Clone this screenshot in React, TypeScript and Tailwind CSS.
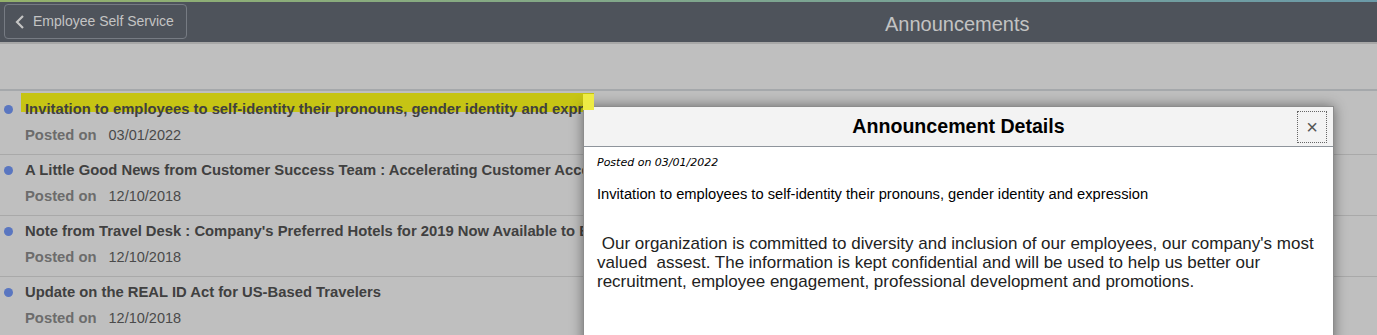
import React from "react";

interface Announcement {
  title: string;
  date: string;
}

const announcements: Announcement[] = [
  {
    title: "Invitation to employees to self-identity their pronouns, gender identity and expression",
    date: "03/01/2022",
  },
  {
    title: "A Little Good News from Customer Success Team : Accelerating Customer Acceptance",
    date: "12/10/2018",
  },
  {
    title: "Note from Travel Desk : Company's Preferred Hotels for 2019 Now Available to Book",
    date: "12/10/2018",
  },
  { title: "Update on the REAL ID Act for US-Based Travelers", date: "12/10/2018" },
];

const App: React.FC = () => {
  return (
    <div className="relative h-[335px] w-full overflow-hidden bg-[#bfbfbf] font-['Liberation_Sans',Arial,sans-serif]">
      {/* верхняя полоска */}
      <div className="h-[2px] bg-linear-to-r from-[#94b16b] to-[#6b9aa8]" />

      {/* шапка */}
      <div className="flex h-[40px] items-start bg-[#4e535b] pl-[4px] pt-[2px]">
        <button className="flex h-[35px] w-[183px] items-center rounded-[4px] border border-[#767b83] pl-[10px] text-[14px] text-[#c4c4c4]">
          <svg width="10" height="16" viewBox="0 0 10 16" className="mr-[8px]">
            <polyline points="8,2 2,8 8,14" fill="none" stroke="#c4c4c4" strokeWidth="2.2" />
          </svg>
          Employee Self Service
        </button>
        <div className="ml-[698px] mt-[8px] text-[20px] leading-[24px] text-[#c3c3c3]">Announcements</div>
      </div>

      <div className="h-[2px] bg-[#a7a7a7]" />
      <div className="h-[45px]" />
      <div className="h-[2px] bg-[#a5a8ab]" />

      {/* список объявлений */}
      <div className="relative pt-[3px]">
        <div className="absolute left-[21px] top-[2px] h-[19px] w-[573px] bg-[#c6c414]" />
        {announcements.map((a, i) => (
          <div key={i} className="relative border-b border-[#a9a9a9] pb-[9px] pt-[6px]">
            <div className="flex h-[19px] items-center whitespace-nowrap text-[14.8px] font-bold leading-[19px] text-[#404040]">
              <span className="ml-[4px] mr-[12px] h-[9px] w-[9px] shrink-0 rounded-full bg-[#5a76c0]" />
              {/* текст уходит под окно — обрезаем по его краю */}
              <span className="max-w-[558px] overflow-hidden">{a.title}</span>
            </div>
            <div className="mt-[7px] flex h-[19px] items-center pl-[25px] leading-[19px]">
              <span className="text-[14.8px] font-bold text-[#6c6c6c]">Posted on</span>
              <span className="ml-[12px] text-[14.5px] text-[#4a4a4a]">{a.date}</span>
            </div>
          </div>
        ))}
      </div>

      {/* окно деталей */}
      <div className="absolute left-[583px] top-[106px] h-[240px] w-[751px] border border-[#8c8c8c] bg-white shadow-[0_0_12px_rgba(0,0,0,0.45)]">
        <div className="relative flex h-[40px] items-center justify-center border-b border-[#8e949b] bg-[#f3f3f3]">
          <span className="text-[19.6px] font-bold text-black">Announcement Details</span>
          <button className="absolute right-[6px] top-[4px] flex h-[32px] w-[30px] items-center justify-center border border-dotted border-[#666] text-[20px] leading-none text-[#555]">
            ×
          </button>
        </div>
        <div className="pl-[13px] pr-[12px] pt-[9px]">
          <div className="text-[11px] italic leading-[14px] text-black font-['DejaVu_Sans',Verdana,sans-serif]">
            Posted on 03/01/2022
          </div>
          <div className="mt-[16px] text-[14.7px] leading-[17px] text-black">
            Invitation to employees to self-identity their pronouns, gender identity and expression
          </div>
          <p className="mt-[31px] whitespace-pre-wrap text-[17px] leading-[19px] text-[#222]">
            {" Our organization is committed to diversity and inclusion of our employees, our company's most valued  assest. The information is kept confidential and will be used to help us better our recruitment, employee engagement, professional development and promotions."}
          </p>
        </div>
      </div>

      {/* яркий край выделения поверх окна */}
      <div className="absolute left-[583px] top-[94px] h-[16px] w-[11px] bg-[#eeeb44]" />
    </div>
  );
};

export default App;
